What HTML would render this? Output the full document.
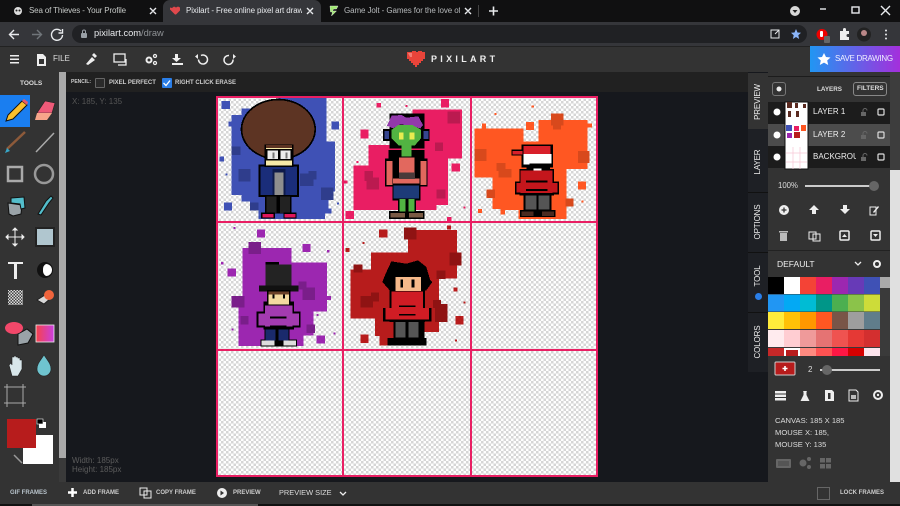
<!DOCTYPE html>
<html><head><meta charset="utf-8"><title>Pixilart</title>
<style>
*{margin:0;padding:0;box-sizing:border-box}
html,body{width:900px;height:506px;overflow:hidden;background:#16181d;font-family:"Liberation Sans",sans-serif;color:#ddd}
.a{position:absolute}
.t{position:absolute;white-space:nowrap;line-height:1}
svg{position:absolute;overflow:hidden}
.b{font-weight:700}
.v{position:absolute;white-space:nowrap;font-size:8px;letter-spacing:-.15px;color:#eee;transform:translate(-50%,-50%) rotate(-90deg);line-height:1}
</style></head><body>
<div class="a" style="left:0;top:0;width:900px;height:22px;background:#101011"></div>
<div class="a" style="left:163px;top:0;width:158px;height:23px;background:#35363a;border-radius:7px 7px 0 0"></div>
<div class="a" style="left:478px;top:5px;width:1px;height:12px;background:#444"></div>
<div class="t" style="left:29px;top:7px;font-size:8px;letter-spacing:-.15px;color:#c4c7c5">Sea of Thieves - Your Profile</div>
<div class="t" style="left:186px;top:7px;font-size:8px;letter-spacing:-.1px;color:#e8eaed;width:116px;overflow:hidden">Pixilart - Free online pixel art drawing</div>
<div class="t" style="left:344px;top:7px;font-size:8px;letter-spacing:-.1px;color:#b5b8ba;width:116px;overflow:hidden">Game Jolt - Games for the love of</div>
<div class="a" style="left:0;top:22px;width:900px;height:24px;background:#35363a"></div>
<div class="a" style="left:72px;top:25px;width:735px;height:18px;background:#202124;border-radius:9px"></div>
<div class="t" style="left:94px;top:29px;font-size:9.3px;color:#e8eaed">pixilart.com<span style="color:#8f9296">/draw</span></div>
<div class="a" style="left:0;top:46px;width:900px;height:26px;background:#333;border-top:1px solid #222"></div>
<div class="a" style="left:0;top:72px;width:900px;height:20px;background:#212121"></div>
<div class="a" style="left:810px;top:46px;width:90px;height:26px;background:linear-gradient(90deg,#2196f3,#a42fdc)"></div>
<div class="t" style="left:835px;top:55px;font-size:8px;letter-spacing:-.3px;color:#f0f0ff">SAVE DRAWING</div>
<div class="t" style="left:53px;top:55px;font-size:8px;color:#ddd">FILE</div>
<div class="t b" style="left:431px;top:55px;font-size:9px;letter-spacing:3.3px;color:#eee">PIXILART</div>
<div class="t b" style="left:71px;top:80px;font-size:5px;color:#ccc">PENCIL:</div>
<div class="t b" style="left:109px;top:80px;font-size:6px;color:#ccc">PIXEL PERFECT</div>
<div class="t b" style="left:175px;top:80px;font-size:6px;color:#ccc">RIGHT CLICK ERASE</div>
<div class="a" style="left:95px;top:78px;width:10px;height:10px;border:1px solid #666;background:#2a2a2a;border-radius:1px"></div>
<div class="a" style="left:162px;top:78px;width:10px;height:10px;background:#2a7ee8;border-radius:1px"></div>
<div class="a" style="left:0;top:72px;width:59px;height:410px;background:#333"></div>
<div class="a" style="left:59px;top:72px;width:7px;height:386px;background:#a9a9a9"></div>
<div class="a" style="left:59px;top:458px;width:7px;height:24px;background:#3a3a3a"></div>
<div class="t b" style="left:20px;top:81px;font-size:6.5px;color:#ddd">TOOLS</div>
<div class="t" style="left:72px;top:98px;font-size:8px;color:#555">X: 185, Y: 135</div>
<div class="t" style="left:72px;top:457px;font-size:8px;color:#5c5c5c">Width: 185px</div>
<div class="t" style="left:72px;top:466px;font-size:8px;color:#5c5c5c">Height: 185px</div>

<div class="a" style="left:748px;top:72px;width:20px;height:410px;background:#16181d"></div>
<div class="a" style="left:748px;top:73px;width:20px;height:56px;background:#333"></div>
<div class="a" style="left:748px;top:129px;width:20px;height:63px;background:#1e2025"></div>
<div class="a" style="left:748px;top:192px;width:20px;height:60px;background:#1e2025;border-top:1px solid #111"></div>
<div class="a" style="left:748px;top:252px;width:20px;height:60px;background:#1e2025;border-top:1px solid #111"></div>
<div class="a" style="left:748px;top:312px;width:20px;height:60px;background:#1e2025;border-top:1px solid #111"></div>
<div class="v" style="left:758px;top:102px">PREVIEW</div>
<div class="v" style="left:758px;top:162px">LAYER</div>
<div class="v" style="left:758px;top:222px">OPTIONS</div>
<div class="v" style="left:758px;top:276px">TOOL</div>
<div class="a" style="left:755px;top:292.500px;width:7px;height:7px;border-radius:50%;background:#2a7ee8"></div>
<div class="v" style="left:758px;top:342px">COLORS</div>
<div class="a" style="left:768px;top:72px;width:122px;height:410px;background:#333"></div>
<div class="a" style="left:890px;top:72px;width:10px;height:98px;background:#3d3d3d"></div>
<div class="a" style="left:890px;top:170px;width:10px;height:312px;background:#e0e0e0"></div>
<div class="a" style="left:768px;top:76px;width:122px;height:1px;background:#1c1c1c"></div>
<div class="t b" style="left:817px;top:87px;font-size:6.3px;color:#ddd">LAYERS</div>
<div class="a" style="left:772px;top:82px;width:14px;height:14px;border:1px solid #777;border-radius:3px"></div>
<div class="a" style="left:853px;top:82px;width:34px;height:14px;border:1px solid #888;border-radius:3px"></div>
<div class="t b" style="left:857px;top:86px;font-size:6.5px;color:#ddd">FILTERS</div>
<div class="a" style="left:768px;top:102px;width:122px;height:22px;background:#1c1c1c"></div>
<div class="a" style="left:768px;top:124px;width:122px;height:22px;background:#4c4c4c"></div>
<div class="a" style="left:768px;top:146px;width:122px;height:22px;background:#1c1c1c"></div>
<div class="t" style="left:813px;top:108px;font-size:8px;color:#eee">LAYER 1</div>
<div class="t" style="left:813px;top:131px;font-size:8px;color:#eee">LAYER 2</div>
<div class="t" style="left:813px;top:153px;font-size:8px;color:#eee;width:43px;overflow:hidden">BACKGROUND</div>
<div class="t" style="left:778px;top:182px;font-size:7.8px;color:#ddd">100%</div>
<div class="a" style="left:768px;top:250px;width:122px;height:1px;background:#222"></div>
<div class="t" style="left:777px;top:260px;font-size:8.500px;color:#eee">DEFAULT</div>
<div class="t" style="left:808px;top:366px;font-size:8px;color:#ddd">2</div>
<div class="t" style="left:775px;top:417px;font-size:7.6px;color:#ddd">CANVAS: 185 X 185</div>
<div class="t" style="left:775px;top:429px;font-size:7.6px;color:#ddd">MOUSE X: 185,</div>
<div class="t" style="left:775px;top:441px;font-size:7.6px;color:#ddd">MOUSE Y: 135</div>
<div class="a" style="left:0;top:482px;width:900px;height:24px;background:#333"></div>
<div class="t b" style="left:10px;top:490px;font-size:6px;color:#b9c4cc">GIF FRAMES</div>
<div class="t b" style="left:83px;top:490px;font-size:6px;color:#ccc">ADD FRAME</div>
<div class="t b" style="left:156px;top:490px;font-size:6px;color:#ccc">COPY FRAME</div>
<div class="t b" style="left:233px;top:490px;font-size:6px;color:#ccc">PREVIEW</div>
<div class="t" style="left:279px;top:489px;font-size:7.4px;color:#ddd">PREVIEW SIZE</div>
<div class="t b" style="left:840px;top:490px;font-size:6px;color:#ccc">LOCK FRAMES</div>
<div class="a" style="left:817px;top:487px;width:13px;height:13px;border:1px solid #666"></div>

<svg style="left:0;top:0" width="900" height="506" viewBox="0 0 900 506">
<defs>
<linearGradient id="gr"><stop offset="0" stop-color="#f7424a"/><stop offset="1" stop-color="#c93fe0"/></linearGradient>
<pattern id="dith" width="3" height="3" patternUnits="userSpaceOnUse"><rect width="3" height="3" fill="#444"/><rect width="1.500" height="1.500" fill="#ddd"/><rect x="1.500" y="1.500" width="1.500" height="1.500" fill="#ddd"/></pattern>
</defs>
<g fill="none" stroke="#e8eaed" stroke-width="1.400">
<path d="M150 8l6 6M156 8l-6 6M307 8l6 6M313 8l-6 6M465 8l6 6M471 8l-6 6"/>
<path d="M489 11h9M493.500 6.500v9" stroke-width="1.600"/>
<path d="M820 9h6"/><rect x="852" y="7" width="7" height="6"/>
<path d="M881 6l9 9M890 6l-9 9"/>
<path d="M19 34.500h-9M14 30l-4.500 4.500L14 39"/>
<path d="M32 34.500h9M37 30l4.500 4.500L37 39" stroke="#70757a"/>
<path d="M61 31a5.500 5.500 0 1 0 1.500 4M62.500 29v4h-4"/>
<rect x="771" y="30" width="8" height="8" stroke-width="1"/><path d="M775 34l4-4" stroke-width="1"/>
</g>
<circle cx="18" cy="11" r="4" fill="#ddd"/><circle cx="16.500" cy="10.500" r="1" fill="#222"/><circle cx="19.500" cy="10.500" r="1" fill="#222"/>
<rect x="81" y="33" width="6" height="5" rx="1" fill="#9aa0a6"/><path d="M82.500 33v-1.500a1.500 1.500 0 0 1 3 0V33" fill="none" stroke="#9aa0a6"/>
<path d="M796 29l1.500 3.500 3.500.3-2.700 2.400.8 3.800-3.100-2-3.100 2 .8-3.800-2.700-2.400 3.500-.3z" fill="#8ab4f8"/>
<circle cx="822" cy="34.500" r="5.500" fill="#e00"/><rect x="820" y="31" width="3" height="6" fill="#fff" rx="1"/><rect x="824" y="36" width="6" height="7" rx="1" fill="#666"/>
<path d="M840 31h3v-1.500a1.500 1.500 0 0 1 3 0V31h3v3h-1a1.500 1.500 0 0 0 0 3h1v3h-9z" fill="#eee"/>
<circle cx="864" cy="34.500" r="7" fill="#222"/><circle cx="864" cy="33" r="3" fill="#b88"/>
<g fill="#e8eaed"><circle cx="886" cy="30.500" r="1"/><circle cx="886" cy="34.500" r="1"/><circle cx="886" cy="38.500" r="1"/></g>
<circle cx="795" cy="11" r="5" fill="#d8d8d8"/><path d="M792.500 10h5l-2.500 3z" fill="#222"/>
<path d="M172 8l2-1.500 2 1 2-1 2 1v3l-2 2-2 2h-1l-3-3-2-2v-2z" fill="#e0484c"/>
<path d="M330 6h8l-1.500 3h-3l-1 2h4l-5 5 1-4h-2z" fill="#9fe870" stroke="#eee" stroke-width=".4"/>
<g fill="#eee"><rect x="10" y="55" width="9" height="1.500"/><rect x="10" y="58.500" width="9" height="1.500"/><rect x="10" y="62" width="9" height="1.500"/></g>
<path d="M37 54h6l3 3v9h-9z" fill="#eee"/><rect x="39" y="59" width="5" height="5" fill="#333"/>
<path d="M86 64l6-7 3 3-7 5zM92 55l2-2 3 3-2 2z" fill="#eee"/>
<g fill="none" stroke="#eee" stroke-width="1.300"><rect x="114" y="54" width="11" height="8"/><path d="M118 65h8v-6"/><circle cx="149" cy="60" r="2.500" stroke-width="2"/><circle cx="155" cy="56" r="1.500"/><circle cx="155" cy="63" r="1.500"/><path d="M201 55.500a4.500 4.500 0 1 1-2.500 4M229 55.500a4.500 4.500 0 1 0 4 4" stroke-width="1.500"/></g>
<path d="M175 54h3v4h3l-4.500 4-4.500-4h3zM172 63h11v2h-11z" fill="#eee"/>
<path d="M198 54v5l-3-2.500zM233 54v5l3-2.500z" fill="#eee"/>
<path d="M407 52h5v-1h4v1h2v-1h4v1h3v7h-2v2h-2v2h-2v2h-2v2h-2v-2h-2v-2h-2v-2h-2v-2h-2z" fill="#e8443a"/>
<path d="M408 53h4v4h-2z" fill="#f27d74"/>
<path d="M824 53l2 4 4.500.5-3.300 3 1 4.500-4.200-2.400-4.200 2.400 1-4.500-3.300-3 4.500-.5z" fill="#fff"/>
<path d="M163.500 83l2.500 2.500 4-5" fill="none" stroke="#fff" stroke-width="1.300"/>

<!-- left tools -->
<rect x="0" y="95" width="30" height="32" fill="#1a7ef0"/>
<path d="M6 121l2-6 14-14 5 4-14 14z" fill="#fbc02d" stroke="#111"/><path d="M22 101l2-2 4 3-1 3z" fill="#e85a6a"/>
<polygon points="45,101 55,103 52,113 37,113" fill="#ee5a78" stroke="#222" stroke-width=".6"/><polygon points="37,113 52,113 47,120 35,120" fill="#f7a58a"/>
<path d="M7 149l18-17" stroke="#8d5a3a" stroke-width="2.500"/><path d="M5 153l2-5 3 3z" fill="#38a7c8"/>
<path d="M36 152l18-19" stroke="#aaa" stroke-width="1.500"/>
<rect x="8" y="167" width="14" height="14" fill="none" stroke="#aaa" stroke-width="2.500"/>
<circle cx="44" cy="174" r="9" fill="none" stroke="#999" stroke-width="2.500"/>
<path d="M8 203l14 2-1 9-8 2-4-2z" fill="#9aa3a8" stroke="#111"/><path d="M11 198l13-1 1 11-4 1-1-5-9-1z" fill="#53bdcb" stroke="#111"/>
<path d="M38 214l8-13 5-5 2 2-4 5-8 12z" fill="#53bdcb" stroke="#111"/>
<g stroke="#eee" stroke-width="1" fill="#eee"><path d="M15 229v16M7 237h16"/><path d="M15 228l-2 2h4zM15 246l-2-2h4zM6 237l2-2v4zM24 237l-2-2v4z"/></g>
<rect x="36" y="228" width="18" height="18" fill="#b0c6cf" stroke="#222" stroke-width="2"/>
<path d="M8 262h15v2h-6v15h-3v-15h-6z" fill="#eee"/>
<circle cx="45" cy="270" r="8" fill="#111"/><path d="M46 264a6 6 0 0 1 0 12 5 6 0 0 1-3-6 5 6 0 0 1 3-6z" fill="#fff"/>
<rect x="8" y="290" width="15" height="15" fill="url(#dith)"/>
<path d="M37 300l8-5 6 3-7 6z" fill="#d8d8d8" stroke="#222"/><circle cx="49" cy="295" r="5" fill="#f0643c"/>
<path d="M18 334l9-5 6 5-5 9-10 2z" fill="#9aa3a8" stroke="#111"/><ellipse cx="14" cy="328" rx="9" ry="6" fill="#f2486a"/>
<rect x="36" y="325" width="18" height="17" fill="url(#gr)" stroke="#eee" stroke-width=".8"/>
<path d="M9 365l2-2 1 2v-8h2v-1h2v1h2v1h2v2h2v9l-4 7h-6z" fill="#d8e6ea" stroke="#222" stroke-width=".6"/>
<path d="M44 355c4 6 7 9 7 14a7 7 0 0 1-14 0c0-5 3-8 7-14z" fill="#6fc4cf" stroke="#222" stroke-width=".6"/>
<g stroke="#aaa" stroke-width="1"><path d="M4 387h22M4 403h22M7 384v23M23 384v23"/></g>
<rect x="23" y="435" width="30" height="29" fill="#fff"/>
<rect x="7" y="419" width="29" height="29" fill="#b71c1c"/>
<rect x="39" y="422" width="7" height="6" fill="#fff"/><rect x="37" y="419" width="6" height="5" fill="#000" stroke="#fff" stroke-width=".6"/>
<path d="M14 455l8 8" stroke="#999" stroke-width="1.500"/>

<!-- layer panel -->
<circle cx="779" cy="89" r="2.500" fill="#eee"/>
<rect x="785" y="102" width="23" height="67" fill="#fff" stroke="#111"/>
<g fill="#5a2a20"><rect x="787" y="102" width="5" height="6"/><rect x="795" y="103" width="3" height="5"/><rect x="803" y="104" width="3" height="4"/><rect x="788" y="111" width="3" height="6"/><rect x="796" y="111" width="3" height="6"/></g>
<rect x="786" y="125" width="6" height="6" fill="#3f51b5"/><rect x="794" y="126" width="5" height="5" fill="#e91e63"/><rect x="801" y="125" width="5" height="6" fill="#ff5722"/><rect x="787" y="133" width="5" height="5" fill="#9c27b0"/><rect x="794" y="132" width="6" height="6" fill="#b71c1c"/>
<g stroke="#f7c6d5" stroke-width=".7"><path d="M786 153h21M786 162h21M793 147v22M800 147v22"/></g>
<g fill="#fff"><circle cx="777" cy="112" r="3.500"/><circle cx="777" cy="135" r="3.500"/><circle cx="777" cy="157" r="3.500"/></g>
<g fill="none" stroke="#ddd" stroke-width="1.200"><rect x="878" y="109" width="6" height="6" rx="1"/><rect x="878" y="132" width="6" height="6" rx="1"/><rect x="878" y="154" width="6" height="6" rx="1"/></g>
<g fill="#666"><rect x="861" y="112" width="5" height="4"/><rect x="861" y="135" width="5" height="4"/><rect x="861" y="157" width="5" height="4"/></g>
<g fill="none" stroke="#666"><path d="M863 112v-1.500a2 2 0 0 1 4 0M863 135v-1.500a2 2 0 0 1 4 0M863 157v-1.500a2 2 0 0 1 4 0"/></g>
<rect x="805" y="185" width="65" height="2" fill="#ccc"/><circle cx="874" cy="186" r="5" fill="#666"/>
<circle cx="784" cy="210" r="5" fill="#eee"/><path d="M781.500 210h5M784 207.500v5" stroke="#333" stroke-width="1.300"/>
<path d="M814 205l5 5h-3v4h-4v-4h-3z" fill="#eee"/><path d="M845 214l5-5h-3v-4h-4v4h-3z" fill="#eee"/>
<path d="M870 207h6v8h-6z" fill="none" stroke="#eee"/><path d="M873 212l5-6 1 1-5 6z" fill="#eee"/>
<path d="M780 233h7v8h-7zM779 231h9v1.500h-9z" fill="#bbb"/>
<rect x="809" y="232" width="7" height="7" fill="none" stroke="#eee"/><rect x="813" y="234" width="7" height="7" fill="none" stroke="#eee"/>
<rect x="840" y="231" width="9" height="9" rx="1" fill="none" stroke="#eee" stroke-width="1.500"/><path d="M842 237h5l-2.500-3z" fill="#eee"/>
<rect x="871" y="231" width="9" height="9" rx="1" fill="none" stroke="#eee" stroke-width="1.500"/><path d="M873 234h5l-2.500 3z" fill="#eee"/>
<path d="M855 262l3 3 3-3" fill="none" stroke="#eee" stroke-width="1.300"/><circle cx="877" cy="264" r="3" fill="none" stroke="#eee" stroke-width="2"/>
<rect x="768" y="277" width="122" height="79" fill="#3a3a3a"/>
<rect x="768" y="277" width="16" height="17" fill="#000"/>
<rect x="784" y="277" width="16" height="17" fill="#fff"/><rect x="800" y="277" width="16" height="17" fill="#f44336"/><rect x="816" y="277" width="16" height="17" fill="#e91e63"/><rect x="832" y="277" width="16" height="17" fill="#9c27b0"/><rect x="848" y="277" width="16" height="17" fill="#673ab7"/><rect x="864" y="277" width="16" height="17" fill="#3f51b5"/>
<rect x="768" y="294.500" width="16" height="17" fill="#2196f3"/><rect x="784" y="294.500" width="16" height="17" fill="#03a9f4"/><rect x="800" y="294.500" width="16" height="17" fill="#00bcd4"/><rect x="816" y="294.500" width="16" height="17" fill="#009688"/><rect x="832" y="294.500" width="16" height="17" fill="#4caf50"/><rect x="848" y="294.500" width="16" height="17" fill="#8bc34a"/><rect x="864" y="294.500" width="16" height="17" fill="#cddc39"/>
<rect x="768" y="312" width="16" height="17" fill="#ffeb3b"/><rect x="784" y="312" width="16" height="17" fill="#ffc107"/><rect x="800" y="312" width="16" height="17" fill="#ff9800"/><rect x="816" y="312" width="16" height="17" fill="#ff5722"/><rect x="832" y="312" width="16" height="17" fill="#795548"/><rect x="848" y="312" width="16" height="17" fill="#9e9e9e"/><rect x="864" y="312" width="16" height="17" fill="#607d8b"/>
<rect x="768" y="330" width="16" height="17" fill="#ffebee"/><rect x="784" y="330" width="16" height="17" fill="#ffcdd2"/><rect x="800" y="330" width="16" height="17" fill="#ef9a9a"/><rect x="816" y="330" width="16" height="17" fill="#e57373"/><rect x="832" y="330" width="16" height="17" fill="#ef5350"/><rect x="848" y="330" width="16" height="17" fill="#e53935"/><rect x="864" y="330" width="16" height="17" fill="#d32f2f"/>
<rect x="768" y="348" width="16" height="8" fill="#c62828"/><rect x="784" y="348" width="16" height="8" fill="#fff"/><rect x="786" y="350" width="12" height="6" fill="#b71c1c"/><rect x="800" y="348" width="16" height="8" fill="#ff8a80"/><rect x="816" y="348" width="16" height="8" fill="#ff5252"/><rect x="832" y="348" width="16" height="8" fill="#ff1744"/><rect x="848" y="348" width="16" height="8" fill="#d50000"/><rect x="864" y="348" width="16" height="8" fill="#fce4ec"/>
<rect x="880" y="277" width="10" height="11" fill="#aaa"/>
<rect x="775" y="362" width="20" height="13" rx="1" fill="#b71c1c" stroke="#ccc"/><path d="M782.500 368.500h5M785 366v5" stroke="#fff" stroke-width="1.600"/>
<rect x="820" y="369" width="60" height="2" fill="#ccc"/><circle cx="827" cy="370" r="5" fill="#666"/>
<g fill="#eee"><rect x="775" y="391" width="11" height="2.500"/><rect x="775" y="394.500" width="11" height="2.500"/><rect x="775" y="398" width="11" height="2.500"/></g>
<path d="M803 391h4l-.5 1v3l3 6h-9l3-6v-3z" fill="#eee"/>
<path d="M825 390h7l2 2v9h-9z" fill="#eee"/><rect x="828" y="393" width="2.500" height="6" fill="#333"/>
<path d="M849 390h7l2 2v9h-9z" fill="none" stroke="#eee"/><rect x="851" y="395" width="5" height="4" fill="#bbb"/>
<circle cx="878" cy="395" r="4" fill="none" stroke="#eee" stroke-width="2"/><circle cx="878" cy="395" r="1.200" fill="#eee"/>
<rect x="776" y="459" width="15" height="9" rx="1" fill="#666"/><rect x="778" y="461" width="11" height="5" fill="#555"/>
<g fill="#666"><circle cx="803" cy="463" r="3.500"/><circle cx="809" cy="459" r="2"/><circle cx="809" cy="467" r="2"/><rect x="820" y="458" width="5" height="4.500"/><rect x="826" y="458" width="5" height="4.500"/><rect x="820" y="464" width="5" height="4.500"/><rect x="826" y="464" width="5" height="4.500"/></g>
<path d="M72.500 488v9M68 492.500h9" stroke="#fff" stroke-width="2.500"/>
<rect x="140" y="488" width="7" height="7" fill="none" stroke="#eee"/><rect x="144" y="491" width="7" height="7" fill="none" stroke="#eee"/>
<circle cx="222" cy="493" r="5" fill="#eee"/><path d="M220.500 490.500v5l3.500-2.500z" fill="#333"/>
<path d="M340 492l3 3 3-3" fill="none" stroke="#eee" stroke-width="1.300"/>
<rect x="32" y="504" width="226" height="2" fill="#555"/><rect x="0" y="504" width="32" height="2" fill="#111"/><rect x="258" y="504" width="642" height="2" fill="#111"/>
</svg>

<!-- canvas -->
<svg style="left:216px;top:96px" width="382" height="381" viewBox="0 0 382 381">
<defs><pattern id="ch" width="5" height="5" patternUnits="userSpaceOnUse"><rect width="5" height="5" fill="#fff"/><rect width="2.500" height="2.500" fill="#d6d6d6"/><rect x="2.500" y="2.500" width="2.500" height="2.500" fill="#d6d6d6"/></pattern></defs>
<rect width="382" height="381" fill="url(#ch)"/>
<g shape-rendering="crispEdges">
<!-- cell 1 -->
<g transform="translate(-1,-1) scale(.33333)">
<polygon fill="#3f51b5" points="190,8 335,8 335,140 360,140 360,290 340,290 340,340 350,340 350,355 330,355 330,372 130,372 130,345 105,345 105,320 80,320 80,300 50,300 50,95 40,95 40,80 50,80 50,60 80,60 80,40 190,40"/>
<g fill="#3f51b5"><rect x="20" y="18" width="25" height="24"/><rect x="350" y="80" width="22" height="24"/><rect x="13" y="185" width="14" height="14"/><rect x="27" y="322" width="24" height="24"/><rect x="32" y="235" width="6" height="6"/><rect x="366" y="322" width="6" height="6"/></g>
<g fill="#2f3d8c"><rect x="50" y="155" width="26" height="25"/><rect x="70" y="222" width="36" height="38"/><rect x="255" y="235" width="40" height="38"/><rect x="280" y="228" width="25" height="25"/><rect x="318" y="278" width="37" height="37"/><rect x="105" y="322" width="26" height="24"/></g>
<rect x="130" y="208" width="122" height="98" fill="#000"/>
<rect x="136" y="214" width="110" height="86" fill="#1a2d7a"/>
<rect x="172" y="222" width="40" height="80" fill="#0e1a4a"/>
<rect x="178" y="232" width="28" height="72" fill="#8e8e8e"/>
<rect x="150" y="300" width="80" height="55" fill="#000"/><rect x="155" y="304" width="30" height="50" fill="#222"/><rect x="195" y="304" width="30" height="50" fill="#222"/>
<rect x="138" y="352" width="42" height="19" fill="#000"/><rect x="205" y="352" width="40" height="19" fill="#000"/><rect x="142" y="357" width="34" height="10" fill="#e0165c"/><rect x="209" y="357" width="32" height="10" fill="#e0165c"/>
<ellipse cx="190" cy="103" rx="113" ry="92" fill="#000"/><ellipse cx="190" cy="103" rx="108" ry="87" fill="#5d3423"/>
<rect x="148" y="148" width="88" height="68" fill="#000"/>
<rect x="153" y="150" width="78" height="62" fill="#f7eaa8"/><rect x="153" y="150" width="78" height="9" fill="#5d3423"/>
<rect x="153" y="162" width="40" height="34" fill="#000"/><rect x="193" y="162" width="38" height="34" fill="#000"/>
<rect x="157" y="167" width="32" height="25" fill="#ececec"/><rect x="197" y="167" width="30" height="25" fill="#ececec"/><rect x="173" y="172" width="6" height="18" fill="#777"/><rect x="212" y="172" width="6" height="18" fill="#777"/>
</g>
<!-- cell 2 -->
<g transform="translate(127,-1) scale(.33333)">
<polygon fill="#e91e63" points="208,44 357,44 357,190 315,190 315,330 280,330 280,345 32,345 32,212 76,212 76,150 208,150"/>
<g fill="#e91e63"><rect x="294" y="12" width="24" height="25"/><rect x="100" y="24" width="14" height="14"/><rect x="188" y="30" width="6" height="6"/><rect x="52" y="104" width="24" height="26"/><rect x="40" y="198" width="6" height="6"/><rect x="0" y="256" width="14" height="10"/><rect x="325" y="206" width="26" height="24"/><rect x="8" y="348" width="25" height="24"/><rect x="312" y="366" width="14" height="14"/><rect x="362" y="335" width="6" height="6"/></g>
<g fill="#bb1a50"><rect x="313" y="50" width="38" height="36"/><rect x="276" y="142" width="24" height="26"/><rect x="64" y="228" width="26" height="30"/><rect x="70" y="248" width="38" height="36"/><rect x="281" y="284" width="26" height="26"/></g>
<g fill="#000">
<rect x="120" y="102" width="140" height="36"/><rect x="140" y="56" width="104" height="104"/>
<rect x="136" y="165" width="108" height="30"/><rect x="126" y="190" width="128" height="84"/><rect x="148" y="268" width="84" height="48"/><rect x="165" y="310" width="54" height="44"/><rect x="138" y="348" width="106" height="24"/>
</g>
<polygon fill="#9239ab" points="146,62 176,60 190,68 226,64 240,90 232,100 200,92 172,88 150,100 132,92"/>
<rect x="124" y="108" width="14" height="24" fill="#35458f"/><rect x="242" y="108" width="14" height="24" fill="#35458f"/>
<polygon fill="#52b342" points="146,104 166,90 208,90 234,104 234,130 215,152 168,152 146,130"/>
<rect x="168" y="112" width="14" height="22" fill="#e8ec50"/><rect x="200" y="112" width="14" height="22" fill="#e8ec50"/>
<rect x="176" y="152" width="30" height="32" fill="#52b342"/>
<rect x="168" y="188" width="46" height="46" fill="#e2685e"/>
<rect x="130" y="198" width="18" height="72" fill="#e2685e"/><rect x="232" y="198" width="18" height="72" fill="#e2685e"/>
<rect x="150" y="250" width="80" height="16" fill="#e2685e"/>
<rect x="168" y="232" width="48" height="20" fill="#4a3a3a"/>
<rect x="152" y="272" width="76" height="38" fill="#1d3b78"/>
<rect x="170" y="312" width="18" height="38" fill="#52b342"/><rect x="197" y="312" width="18" height="38" fill="#52b342"/>
<rect x="142" y="354" width="44" height="14" fill="#7a5a44"/><rect x="198" y="354" width="42" height="14" fill="#7a5a44"/>
</g>
<!-- cell 3 -->
<g transform="translate(254,-1) scale(.33333)">
<polygon fill="#ff5722" points="205,75 352,75 352,222 290,222 290,372 145,372 145,345 105,345 105,358 92,358 92,342 68,342 68,248 13,248 13,100 36,100 36,86 48,86 48,100 160,100 160,140 205,140"/>
<g fill="#ff5722"><rect x="168" y="81" width="24" height="24"/><rect x="352" y="86" width="14" height="12"/><rect x="74" y="54" width="6" height="6"/><rect x="185" y="31" width="7" height="6"/><rect x="324" y="260" width="24" height="24"/><rect x="24" y="342" width="12" height="12"/><rect x="335" y="316" width="6" height="6"/></g>
<g fill="#d8491c"><rect x="243" y="55" width="37" height="37"/><rect x="249" y="90" width="24" height="14"/><rect x="13" y="162" width="36" height="36"/><rect x="324" y="168" width="35" height="36"/><rect x="80" y="204" width="26" height="24"/><rect x="86" y="222" width="38" height="26"/><rect x="49" y="284" width="26" height="25"/><rect x="286" y="310" width="25" height="25"/></g>
<g fill="#000">
<rect x="155" y="148" width="94" height="70"/><rect x="124" y="164" width="36" height="18"/><rect x="170" y="215" width="70" height="20"/>
<rect x="148" y="222" width="104" height="80"/><rect x="135" y="260" width="132" height="38"/>
<rect x="160" y="298" width="84" height="50"/><rect x="150" y="345" width="106" height="21"/>
</g>
<rect x="160" y="153" width="82" height="24" fill="#d8202a"/>
<rect x="128" y="168" width="30" height="10" fill="#d8202a"/>
<rect x="160" y="177" width="85" height="32" fill="#fff"/><rect x="178" y="205" width="67" height="6" fill="#000"/>
<rect x="190" y="220" width="24" height="14" fill="#fff"/>
<rect x="152" y="226" width="96" height="68" fill="#c4161c"/><rect x="140" y="264" width="16" height="28" fill="#c4161c"/><rect x="246" y="264" width="16" height="28" fill="#c4161c"/>
<rect x="168" y="256" width="64" height="6" fill="#000"/><rect x="168" y="282" width="64" height="6" fill="#000"/>
<rect x="166" y="302" width="34" height="42" fill="#555"/><rect x="206" y="302" width="32" height="42" fill="#555"/><rect x="155" y="349" width="36" height="14" fill="#4a2a20"/><rect x="216" y="349" width="36" height="14" fill="#4a2a20"/>
</g>
<!-- cell 4 -->
<g transform="translate(-1,126) scale(.33333)">
<polygon fill="#9c27b0" points="82,78 230,78 230,122 336,122 336,268 295,268 295,340 265,340 265,372 70,372 70,256 50,256 50,232 82,232"/>
<g fill="#9c27b0"><rect x="126" y="22" width="24" height="25"/><rect x="262" y="66" width="24" height="24"/><rect x="38" y="140" width="25" height="24"/><rect x="56" y="15" width="6" height="6"/><rect x="18" y="120" width="8" height="8"/><rect x="336" y="84" width="7" height="7"/><rect x="50" y="320" width="6" height="6"/><rect x="305" y="276" width="6" height="6"/><rect x="355" y="332" width="6" height="6"/><rect x="305" y="340" width="25" height="24"/><rect x="336" y="222" width="12" height="12"/></g>
<g fill="#7a1e8a"><rect x="100" y="60" width="38" height="36"/><rect x="250" y="178" width="25" height="25"/><rect x="263" y="197" width="37" height="37"/><rect x="50" y="222" width="38" height="35"/><rect x="76" y="282" width="25" height="25"/><rect x="274" y="308" width="26" height="25"/></g>
<rect x="152" y="120" width="40" height="12" fill="#000"/><rect x="152" y="128" width="78" height="62" fill="#232323"/>
<rect x="132" y="190" width="118" height="18" fill="#111"/>
<g fill="#000"><rect x="145" y="238" width="92" height="84"/><rect x="124" y="268" width="132" height="48"/><rect x="148" y="320" width="76" height="36"/><rect x="136" y="352" width="110" height="22"/></g>
<rect x="156" y="204" width="70" height="50" fill="#000"/><rect x="160" y="208" width="62" height="40" fill="#f3d9a0"/><rect x="160" y="208" width="62" height="10" fill="#6a4028"/><rect x="172" y="218" width="6" height="12" fill="#000"/><rect x="204" y="218" width="6" height="12" fill="#000"/>
<rect x="150" y="250" width="82" height="64" fill="#a33bb0"/><rect x="130" y="274" width="20" height="36" fill="#a33bb0"/><rect x="232" y="274" width="20" height="36" fill="#a33bb0"/>
<rect x="165" y="284" width="50" height="5" fill="#000"/><rect x="165" y="310" width="50" height="5" fill="#000"/>
<rect x="152" y="322" width="30" height="34" fill="#1a2a6c"/><rect x="190" y="322" width="30" height="34" fill="#1a2a6c"/>
<rect x="140" y="356" width="38" height="14" fill="#ddd"/><rect x="205" y="356" width="38" height="14" fill="#ddd"/>
</g>
<!-- cell 5 -->
<g transform="translate(127,126) scale(.33333)">
<polygon fill="#b71c1c" points="195,24 342,24 342,170 288,170 288,330 245,330 245,370 110,370 110,342 96,342 96,290 22,290 22,142 84,142 84,92 195,92"/>
<g fill="#b71c1c"><rect x="108" y="22" width="25" height="25"/><rect x="8" y="78" width="12" height="12"/><rect x="58" y="60" width="6" height="6"/><rect x="312" y="10" width="12" height="12"/><rect x="331" y="196" width="12" height="12"/><rect x="362" y="238" width="6" height="6"/><rect x="337" y="282" width="25" height="26"/><rect x="52" y="338" width="24" height="25"/><rect x="336" y="352" width="6" height="6"/></g>
<g fill="#8f1313"><rect x="183" y="16" width="37" height="37"/><rect x="320" y="92" width="36" height="38"/><rect x="32" y="128" width="26" height="24"/><rect x="281" y="146" width="26" height="25"/><rect x="84" y="212" width="24" height="26"/><rect x="52" y="222" width="38" height="35"/><rect x="270" y="234" width="24" height="24"/><rect x="276" y="246" width="37" height="54"/></g>
<polygon fill="#000" points="145,118 190,125 225,115 250,135 262,175 268,180 250,205 140,205 118,180 128,155"/>
<g fill="#000"><rect x="140" y="200" width="106" height="100"/><rect x="120" y="258" width="146" height="40"/><rect x="152" y="296" width="92" height="56"/><rect x="134" y="348" width="116" height="22"/></g>
<rect x="158" y="165" width="76" height="42" fill="#f5b98a"/><rect x="172" y="172" width="8" height="24" fill="#000"/><rect x="206" y="172" width="8" height="24" fill="#000"/>
<rect x="146" y="208" width="94" height="84" fill="#d01c24"/><rect x="128" y="258" width="20" height="34" fill="#d01c24"/><rect x="238" y="258" width="20" height="34" fill="#d01c24"/>
<rect x="168" y="250" width="50" height="5" fill="#000"/><rect x="168" y="276" width="50" height="5" fill="#000"/>
<rect x="158" y="300" width="30" height="46" fill="#555"/><rect x="196" y="300" width="30" height="46" fill="#555"/>
</g>
<!-- grid -->
<g fill="#e91e63">
<rect x="0" y="0" width="382" height="2"/><rect x="0" y="379" width="382" height="2"/><rect x="0" y="0" width="2" height="381"/><rect x="380" y="0" width="2" height="381"/>
<rect x="126" y="0" width="2" height="381"/><rect x="254" y="0" width="2" height="381"/><rect x="0" y="125" width="382" height="2"/><rect x="0" y="253" width="382" height="2"/>
</g>
</g>
</svg>
</body></html>
